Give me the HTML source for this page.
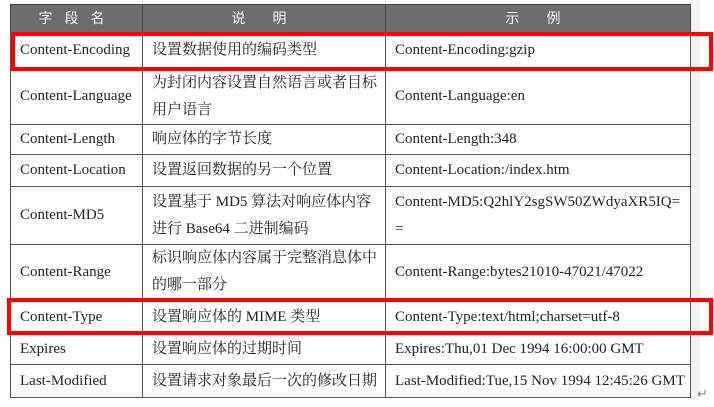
<!DOCTYPE html>
<html><head><meta charset="utf-8"><style>
html,body{margin:0;padding:0;background:#fff;width:714px;height:407px;overflow:hidden;position:relative}
body{font-family:"Liberation Serif","Noto Serif CJK SC",serif;color:#222;font-size:15px}
.side{position:absolute;left:690px;top:0;width:10px;height:400px;background:#f2f2f2}
table{position:absolute;left:10px;top:4px;border-collapse:collapse;width:681px;table-layout:fixed}
td,th{border:1px solid #555;padding:0 7px 0 9px;line-height:27px;text-align:left;vertical-align:middle}
td:nth-child(3){white-space:nowrap;padding-right:0;overflow:visible}
th{background:#6d6d6d;color:#f4f4f4;font-weight:normal;text-align:center;height:27px;letter-spacing:12px;font-family:"Noto Sans CJK SC",sans-serif;font-size:14px;border-color:#444}
.c1{width:132px}
.c2{width:243px}
.box{position:absolute;border:4px solid #f00}
.ret{position:absolute;left:697px;top:386px;color:#888;font-size:13px}
</style></head><body>
<div class="side"></div>
<table>
<colgroup><col class="c1"><col class="c2"><col></colgroup>
<tr><th>字段名</th><th>说 明</th><th>示 例</th></tr>
<tr style="height:36px"><td>Content-Encoding</td><td>设置数据使用的编码类型</td><td>Content-Encoding:gzip</td></tr>
<tr style="height:56px"><td>Content-Language</td><td>为封闭内容设置自然语言或者目标用户语言</td><td>Content-Language:en</td></tr>
<tr style="height:30px"><td>Content-Length</td><td>响应体的字节长度</td><td>Content-Length:348</td></tr>
<tr style="height:32px"><td>Content-Location</td><td>设置返回数据的另一个位置</td><td>Content-Location:/index.htm</td></tr>
<tr style="height:58px"><td>Content-MD5</td><td>设置基于 MD5 算法对响应体内容进行 Base64 二进制编码</td><td>Content-MD5:Q2hlY2sgSW50ZWdyaXR5IQ=<br>=</td></tr>
<tr style="height:54px"><td>Content-Range</td><td>标识响应体内容属于完整消息体中的哪一部分</td><td>Content-Range:bytes21010-47021/47022</td></tr>
<tr style="height:35px"><td>Content-Type</td><td>设置响应体的 MIME 类型</td><td>Content-Type:text/html;charset=utf-8</td></tr>
<tr style="height:30px"><td>Expires</td><td>设置响应体的过期时间</td><td>Expires:Thu,01 Dec 1994 16:00:00 GMT</td></tr>
<tr style="height:33px"><td>Last-Modified</td><td>设置请求对象最后一次的修改日期</td><td>Last-Modified:Tue,15 Nov 1994 12:45:26 GMT</td></tr>
</table>
<div class="box" style="left:11px;top:32px;width:694px;height:31px"></div>
<div class="box" style="left:7px;top:298px;width:698px;height:29px"></div>
<div class="ret">↵</div>
</body></html>
